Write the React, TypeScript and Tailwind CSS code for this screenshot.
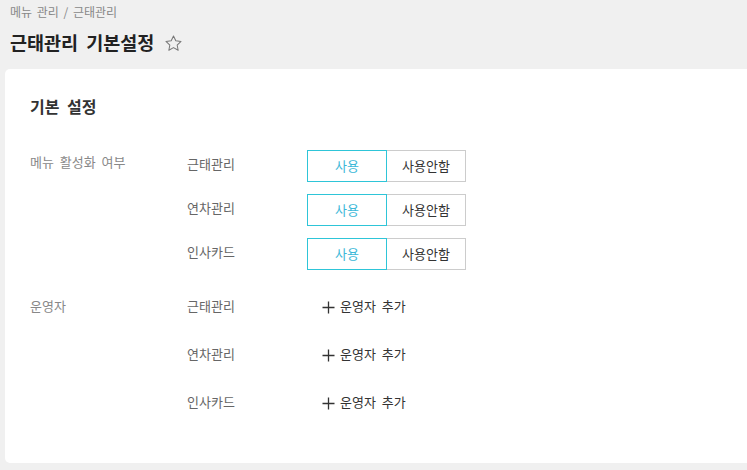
import React from "react";

const menus = ["근태관리", "연차관리", "인사카드"];

const StarIcon = () => (
  <svg width="19" height="19" viewBox="0 0 24 24" fill="none" stroke="#777" strokeWidth="1.3" strokeLinejoin="round">
    <path d="M12 2.5l2.9 6.1 6.6.8-4.9 4.5 1.3 6.6L12 17.2l-5.9 3.3 1.3-6.6-4.9-4.5 6.6-.8z" />
  </svg>
);

const PlusIcon = () => (
  <svg width="13" height="13" viewBox="0 0 13 13" stroke="#333" strokeWidth="1.3">
    <path d="M6.5 0.5v12M0.5 6.5h12" />
  </svg>
);

const UseToggle: React.FC = () => {
  return (
    <div className="flex h-[32px]">
      <button className="w-[80px] h-full border border-[#2ec5d8] text-[#3bb8d8] text-[13px]">사용</button>
      <button className="w-[79px] h-full border border-l-0 border-[#cccccc] text-[#333] text-[13px]">사용안함</button>
    </div>
  );
};

export default function App() {
  return (
    <div
      className="w-[747px] h-[470px] overflow-hidden bg-[#f0f0f0] [word-spacing:3px]"
      style={{ fontFamily: '"Noto Sans CJK KR", "Noto Sans", sans-serif' }}
    >
      {/* Header */}
      <div className="px-[10px] pt-[3px]">
        <div className="text-[12px] leading-[18px] text-[#888] [word-spacing:2px]">메뉴 관리 / 근태관리</div>
        <div className="flex items-center gap-[10px] h-[30px] mt-[7px]">
          <h1 className="text-[18.5px] font-bold text-[#222] [word-spacing:4px]">근태관리 기본설정</h1>
          <StarIcon />
        </div>
      </div>

      {/* Card */}
      <div className="ml-[5px] mt-[11px] h-[394px] bg-white rounded-l-[5px] pl-[25px] pt-[25px]">
        <h2 className="text-[16px] leading-[24px] font-bold text-[#333] [word-spacing:4px]">기본 설정</h2>

        {/* 메뉴 활성화 여부 */}
        <div className="flex mt-[32px]">
          <div className="w-[157px] pt-[2px] text-[13px] leading-[20px] text-[#888]">메뉴 활성화 여부</div>
          <div className="flex flex-col gap-[12px]">
            {menus.map((m) => (
              <div key={m} className="flex">
                <div className="w-[120px] pt-[4px] text-[13px] leading-[20px] text-[#666]">{m}</div>
                <UseToggle />
              </div>
            ))}
          </div>
        </div>

        {/* 운영자 */}
        <div className="flex mt-[26px]">
          <div className="w-[157px] text-[13px] leading-[20px] text-[#888]">운영자</div>
          <div className="flex flex-col gap-[28px]">
            {menus.map((m) => (
              <div key={m} className="flex h-[20px] items-center">
                <div className="w-[135px] text-[13px] leading-[20px] text-[#666]">{m}</div>
                <button className="flex items-center gap-[5px] text-[13px] leading-[20px] text-[#333] [word-spacing:3px]">
                  <span className="mt-[3px]">
                    <PlusIcon />
                  </span>
                  운영자 추가
                </button>
              </div>
            ))}
          </div>
        </div>
      </div>
    </div>
  );
}
